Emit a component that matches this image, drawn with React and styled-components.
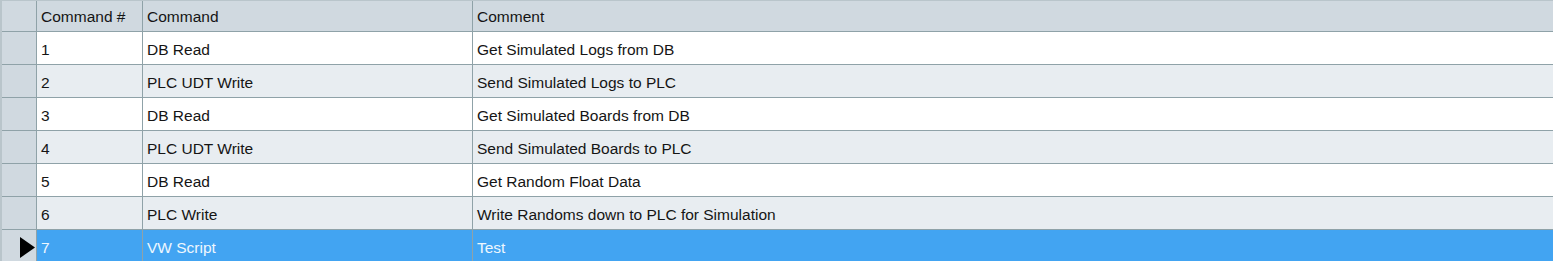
import React from "react";
import styled, { createGlobalStyle } from "styled-components";

const Global = createGlobalStyle`
  html, body { margin: 0; padding: 0; background: #ffffff; }
  body { font-family: "Liberation Sans", Arial, sans-serif; }
`;

const Grid = styled.div`
  display: grid;
  grid-template-columns: 35px 106px 330px 1fr;
  width: 1553px;
  border-left: 2px solid #b9c5cb;
  border-top: 1px solid #b9c5cb;
  box-sizing: border-box;
  font-size: 15.5px;
  color: #111;
`;

const Cell = styled.div`
  box-sizing: border-box;
  height: ${(p) => (p.$header ? "31px" : "33px")};
  display: flex;
  align-items: center;
  padding: ${(p) => (p.$header ? "1px 0 0 4px" : "4px 0 0 4px")};
  white-space: nowrap;
  overflow: hidden;
  border-right: ${(p) => (p.$last ? "none" : "1px solid #8fa2a8")};
  border-bottom: 1px solid #8fa2a8;
  background: ${(p) =>
    p.$header
      ? "#d0d9e0"
      : p.$selected
      ? "#42a4f2"
      : p.$alt
      ? "#e8edf1"
      : "#ffffff"};
  color: ${(p) => (p.$selected ? "#eef7fe" : "#151515")};
`;

const RowHeader = styled.div`
  box-sizing: border-box;
  height: 33px;
  background: #d0d9e0;
  border-right: 1px solid #8fa2a8;
  border-bottom: 1px solid #8fa2a8;
  display: flex;
  align-items: center;
  padding-left: 18px;
`;

const Corner = styled(RowHeader)`
  height: 31px;
`;

const Arrow = styled.svg`
  display: block;
  margin-top: 2px;
`;

const rows = [
  ["1", "DB Read", "Get Simulated Logs from DB"],
  ["2", "PLC UDT Write", "Send Simulated Logs to PLC"],
  ["3", "DB Read", "Get Simulated Boards from DB"],
  ["4", "PLC UDT Write", "Send Simulated Boards to PLC"],
  ["5", "DB Read", "Get Random Float Data"],
  ["6", "PLC Write", "Write Randoms down to PLC for Simulation"],
  ["7", "VW Script", "Test"],
];

export default function App() {
  return (
    <>
      <Global />
      <Grid>
        <Corner />
        <Cell $header>Command #</Cell>
        <Cell $header>Command</Cell>
        <Cell $header $last>Comment</Cell>
        {rows.map((r, i) => {
          const selected = i === rows.length - 1;
          const alt = i % 2 === 1;
          return (
            <React.Fragment key={r[0]}>
              <RowHeader>
                {selected && (
                  <Arrow width="15" height="21" viewBox="0 0 15 21">
                    <polygon points="0,0 15,10.5 0,21" fill="#000" />
                  </Arrow>
                )}
              </RowHeader>
              <Cell $alt={alt} $selected={selected}>{r[0]}</Cell>
              <Cell $alt={alt} $selected={selected}>{r[1]}</Cell>
              <Cell $alt={alt} $selected={selected} $last>{r[2]}</Cell>
            </React.Fragment>
          );
        })}
      </Grid>
    </>
  );
}
